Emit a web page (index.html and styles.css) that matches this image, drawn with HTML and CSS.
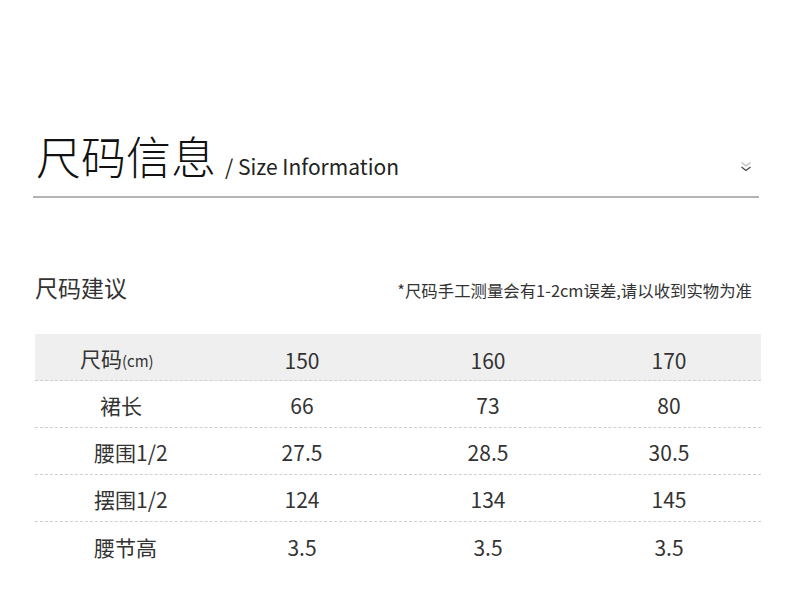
FILE: index.html
```html
<!DOCTYPE html>
<html lang="zh-CN">
<head>
<meta charset="utf-8">
<title>尺码信息</title>
<link rel="stylesheet" href="styles.css">
</head>
<body>
<div class="page">
  <header class="head">
    <h1 class="head-title">尺码信息</h1>
    <span class="head-sub">/ Size Information</span>
    <svg class="head-icon" width="12" height="12" viewBox="0 0 12 12" aria-hidden="true">
      <polyline points="1.5,1.5 6,5 10.5,1.5" fill="none" stroke="#bbb" stroke-width="1.2"/>
      <polyline points="1.5,6 6,9.5 10.5,6" fill="none" stroke="#444" stroke-width="1.2"/>
    </svg>
  </header>

  <div class="sub">
    <h2 class="sub-title">尺码建议</h2>
    <p class="sub-note">*尺码手工测量会有1-2cm误差,请以收到实物为准</p>
  </div>

  <div class="table">
    <div class="row row-head">
      <div class="cell label label-head">尺码<small>(cm)</small></div>
      <div class="cell">150</div>
      <div class="cell">160</div>
      <div class="cell">170</div>
    </div>
    <div class="row">
      <div class="cell label label-short">裙长</div>
      <div class="cell">66</div>
      <div class="cell">73</div>
      <div class="cell">80</div>
    </div>
    <div class="row">
      <div class="cell label">腰围1/2</div>
      <div class="cell">27.5</div>
      <div class="cell">28.5</div>
      <div class="cell">30.5</div>
    </div>
    <div class="row">
      <div class="cell label">摆围1/2</div>
      <div class="cell">124</div>
      <div class="cell">134</div>
      <div class="cell">145</div>
    </div>
    <div class="row row-last">
      <div class="cell label">腰节高</div>
      <div class="cell">3.5</div>
      <div class="cell">3.5</div>
      <div class="cell">3.5</div>
    </div>
  </div>
</div>
</body>
</html>
```

FILE: styles.css
```css
html, body {
  margin: 0;
  padding: 0;
  background: #fff;
}

body {
  font-family: "Noto Sans CJK SC", "Noto Sans", sans-serif;
  color: #333;
}

.page {
  width: 726px;
  padding: 0 31px 0 33px;
}

.head {
  display: flex;
  align-items: baseline;
  padding-top: 126px;
  padding-bottom: 10px;
  border-bottom: 2px solid #b4b4b4;
}

.head-title {
  margin: 0 0 0 3px;
  font-size: 45px;
  font-weight: 300;
  line-height: 60px;
  color: #111;
}

.head-sub {
  margin-left: 9px;
  font-size: 21px;
  font-weight: 400;
  color: #222;
}

.head-icon {
  margin-left: auto;
  margin-right: 7px;
  align-self: center;
  margin-top: 22px;
}

.sub {
  display: flex;
  align-items: baseline;
  justify-content: space-between;
  margin-top: 71px;
  padding-left: 2px;
}

.sub-title {
  margin: 0;
  font-size: 23px;
  font-weight: 400;
  line-height: 36px;
  color: #333;
}

.sub-note {
  margin: 0 7px 0 0;
  font-size: 16.4px;
  color: #333;
}

.table {
  margin-top: 29px;
  margin-left: 2px;
  width: 726px;
}

.row {
  display: grid;
  grid-template-columns: 178px 178px 194px 168px;
  height: 47px;
  align-items: center;
  border-bottom: 1px dashed #cfcfcf;
  box-sizing: border-box;
}

.row-head {
  background: #efefef;
}

.row-last {
  border-bottom: none;
}

.cell {
  text-align: center;
  font-size: 21px;
  line-height: 44px;
  padding-top: 2px;
  color: #333;
}

.label {
  text-align: left;
  padding-left: 59px;
}

.label-head {
  padding-left: 45px;
}

.label-short {
  padding-left: 65px;
}

.label small {
  font-size: 15px;
}
```
